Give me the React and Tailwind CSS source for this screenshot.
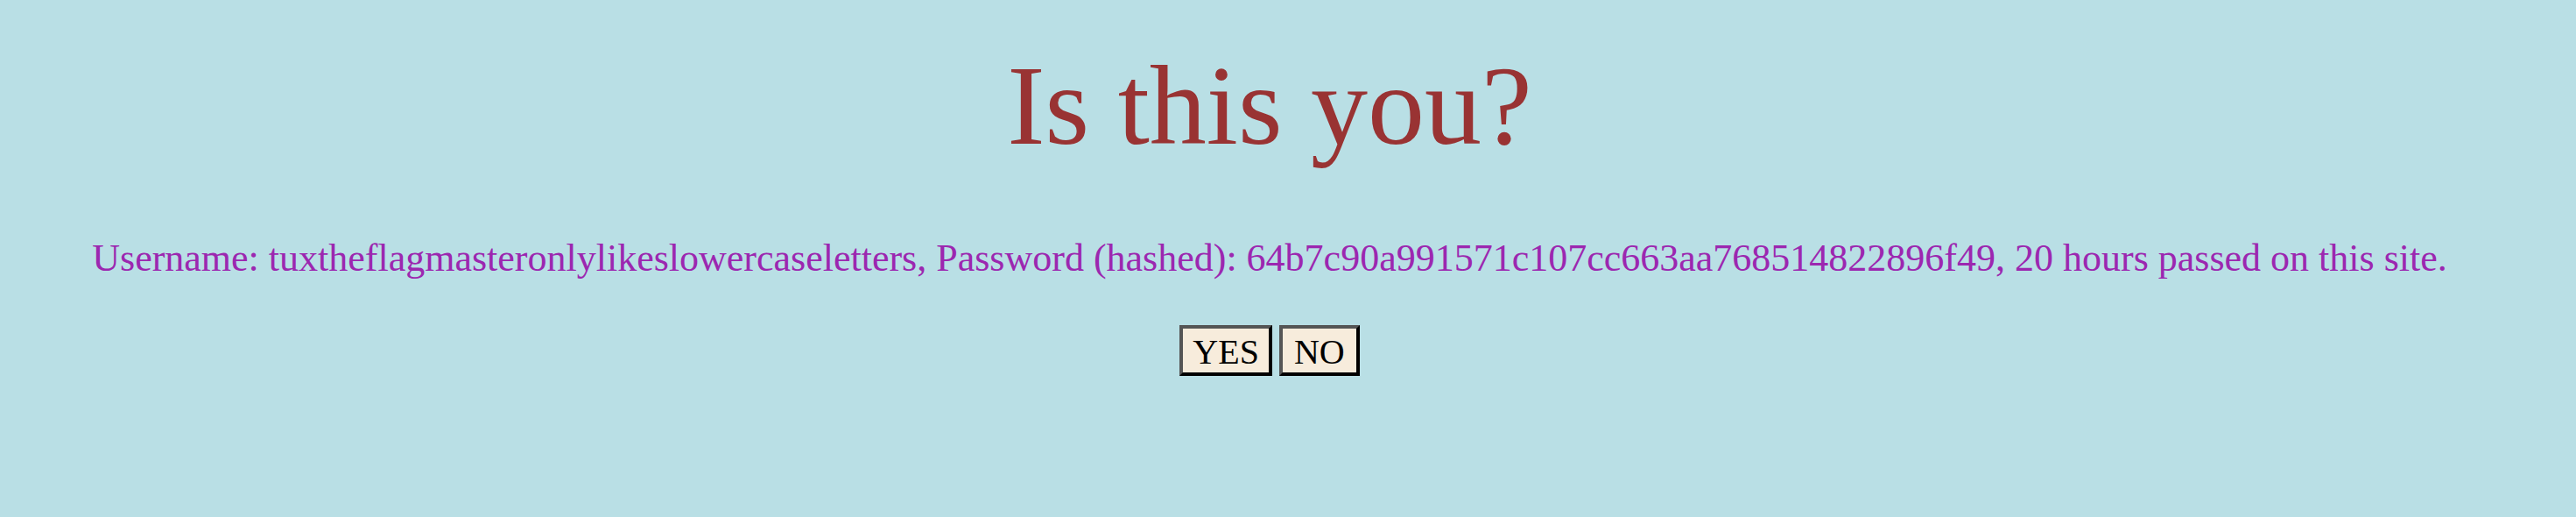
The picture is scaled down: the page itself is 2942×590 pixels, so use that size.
export default function App() {
  return (
    <div className="min-h-screen bg-[#b9dfe5] pr-[42px] pt-[55px] flex flex-col items-center font-['Liberation_Serif',serif]">
      <h1 className="text-[130px] leading-none text-[#993333] whitespace-nowrap">Is this you?</h1>
      <p className="mt-[88px] text-[44px] leading-none text-[#9c27b0] whitespace-nowrap">
        Username: tuxtheflagmasteronlylikeslowercaseletters, Password (hashed): 64b7c90a991571c107cc663aa768514822896f49, 20 hours passed on this site.
      </p>
      <div className="mt-[54px] flex gap-[8px]">
        <button className="bg-[#f7ecdc] border-[4px] border-t-[#555555] border-l-[#555555] border-b-black border-r-black px-[11px] pt-[4px] pb-0 text-[40px] leading-[46px] text-black font-['Liberation_Serif',serif]">YES</button>
        <button className="bg-[#f7ecdc] border-[4px] border-t-[#555555] border-l-[#555555] border-b-black border-r-black px-[13px] pt-[4px] pb-0 text-[40px] leading-[46px] text-black font-['Liberation_Serif',serif]">NO</button>
      </div>
    </div>
  );
}
